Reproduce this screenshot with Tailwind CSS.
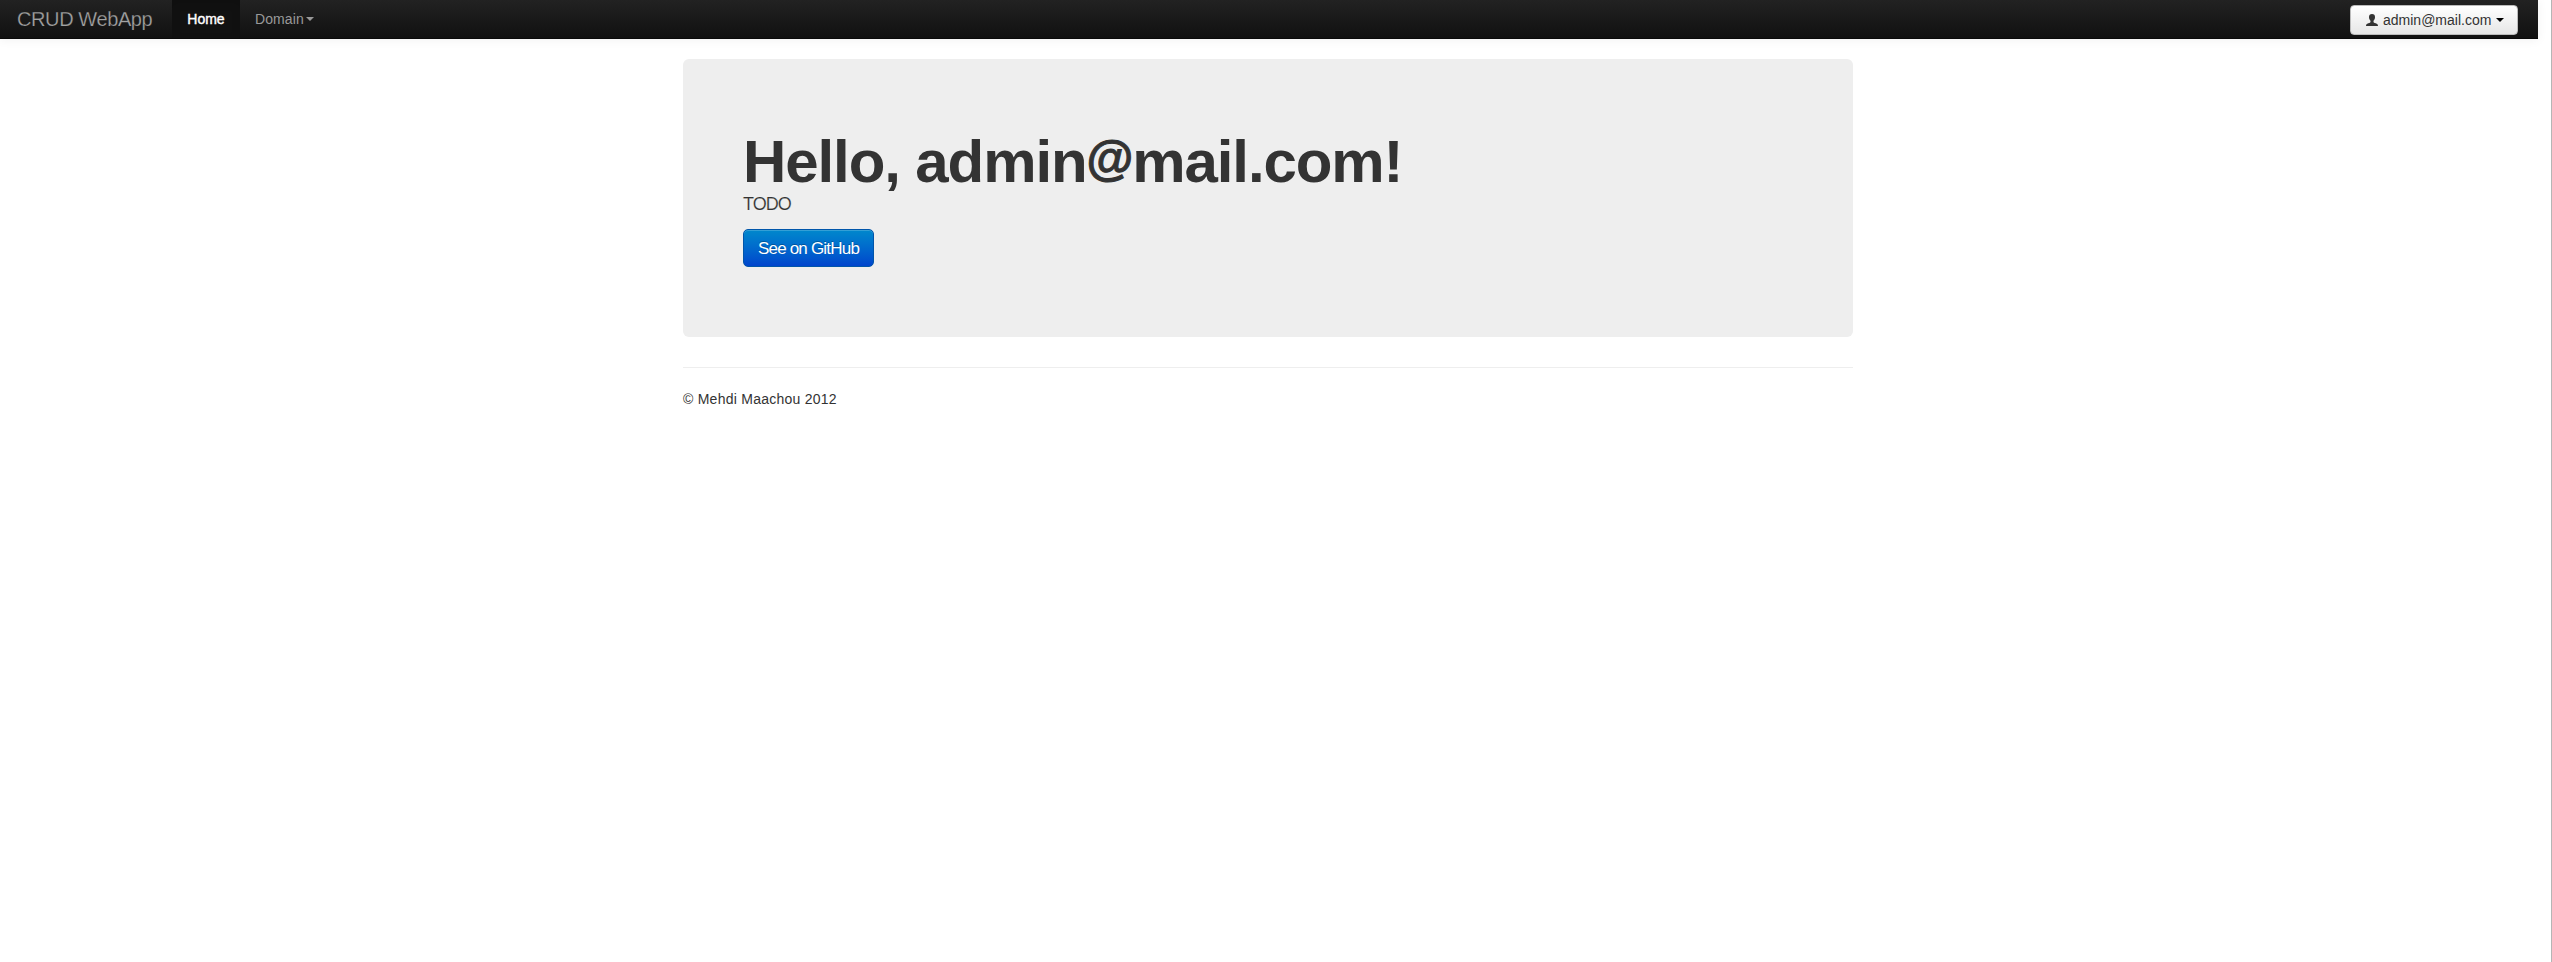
<!DOCTYPE html>
<html lang="en">
<head>
<meta charset="utf-8">
<title>CRUD WebApp</title>
<script src="https://cdn.jsdelivr.net/npm/@tailwindcss/browser@4"></script>
</head>
<body class="h-[962px] overflow-hidden bg-white font-['Liberation_Sans',Arial,sans-serif] text-sm leading-5 text-[#333]">
<div class="flex h-full border-r border-[#b5b5b5]">
  <div class="w-[2538px] shrink-0">
    <nav class="flex h-[39px] items-start border-b border-[#0a0a0a] bg-linear-to-b from-[#222] to-[#111] pl-[17px] pr-5 text-[#999] shadow-[0_1px_10px_rgba(0,0,0,0.06)]">
      <a class="w-[155px] whitespace-nowrap pt-[9px] text-[20px] leading-5 tracking-[-0.4px] text-[#a2a2a2] [-webkit-text-stroke:0.25px_#1b1b1b]">CRUD WebApp</a>
      <a class="flex h-[38px] w-[68px] justify-center bg-[#111] pt-[9px] text-white shadow-[inset_0_3px_8px_rgba(0,0,0,0.125)] [-webkit-text-stroke:0.4px_#fff]">Home</a>
      <a class="flex pl-[15px] pt-[9px] tracking-[0.1px]">Domain<svg class="ml-[2px] mt-[8px]" width="8" height="4"><path d="M0 0h8l-4 4z" fill="#999"/></svg></a>
      <a class="ml-auto mt-[5px] flex h-[30px] w-[168px] rounded border border-[#bbb] bg-linear-to-b from-white to-[#e6e6e6] pl-[15px] pt-1 text-[#333] shadow-[inset_0_1px_0_rgba(255,255,255,0.2)]">
        <svg class="mr-[5px] mt-[4px]" width="12" height="12" viewBox="0 0 12 12"><path d="M6 0C4 0 3 1.200 3 3C3 4.600 3.500 5.800 4.500 6.700V8C4.500 8.500 3.700 8.800 2.300 9.200C.7 9.700 0 10.400 0 12H12C12 10.400 11.300 9.700 9.700 9.200C8.300 8.800 7.500 8.500 7.500 8V6.700C8.500 5.800 9 4.600 9 3C9 1.200 8 0 6 0Z" fill="#333"/></svg>admin@mail.com<svg class="ml-[5px] mt-[8px]" width="8" height="4"><path d="M0 0h8l-4 4z" fill="#000"/></svg>
      </a>
    </nav>
    <main class="ml-[683px] mt-5 w-[1170px]">
      <section class="flex h-[278px] flex-col items-start rounded-md bg-[#eee] px-[60px] pt-[73px] tracking-[-1px]">
        <h1 class="h-[60px] whitespace-nowrap text-[60px] font-bold leading-[60px] tracking-[-1.1px]">Hello, admin<span class="relative -top-[7px] text-[48px] leading-none [-webkit-text-stroke:1px_#333]">@</span>mail.com!</h1>
        <p class="mt-[-3px] text-lg leading-[30px] [-webkit-text-stroke:0.15px_#eee]">TODO</p>
        <a class="mt-[10px] flex h-[38px] w-[131px] items-center justify-center whitespace-nowrap rounded-[5px] border border-[#05a] bg-linear-to-b from-[#08c] to-[#04c] pt-0.5 text-[17px] tracking-[-0.8px] text-white shadow-[inset_0_1px_0_rgba(255,255,255,0.2)] [text-shadow:0_-1px_0_rgba(0,0,0,0.25)]">See on GitHub</a>
      </section>
      <hr class="mt-[30px] border-[#eee]">
      <footer class="mt-[21px] tracking-[0.25px]">© Mehdi Maachou 2012</footer>
    </main>
  </div>
</div>
</body>
</html>
